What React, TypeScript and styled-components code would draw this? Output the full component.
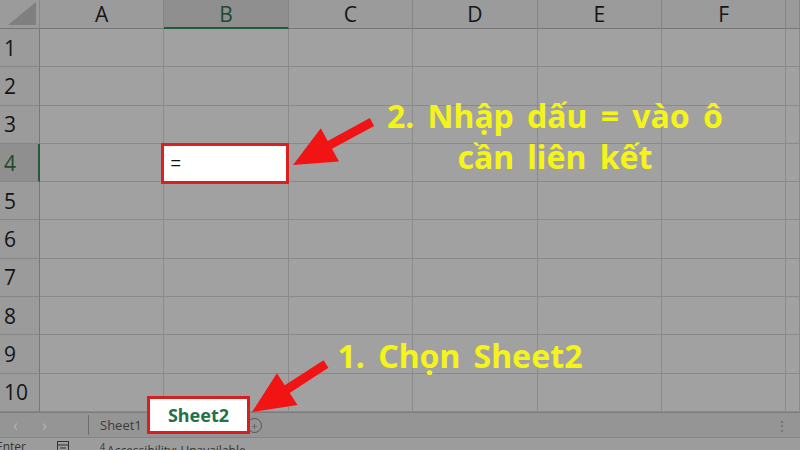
import styled, { createGlobalStyle } from 'styled-components'

const GlobalStyle = createGlobalStyle`
  html, body {
    margin: 0;
    padding: 0;
    background: #a1a1a1;
  }
  #root {
    width: 800px;
    height: 450px;
    overflow: hidden;
  }
`

const COLS = ['A', 'B', 'C', 'D', 'E', 'F', '']
const ROWS = [1, 2, 3, 4, 5, 6, 7, 8, 9, 10]

type Pt = [number, number]

// arrow polygon from tail to tip, shaft + triangular head
const arrowPoints = (tail: Pt, tip: Pt, shaft: number, headL: number, headW: number) => {
  const dx = tip[0] - tail[0]
  const dy = tip[1] - tail[1]
  const len = Math.hypot(dx, dy)
  const ux = dx / len
  const uy = dy / len
  const nx = -uy
  const ny = ux
  const bx = tip[0] - ux * headL
  const by = tip[1] - uy * headL
  const pts: Pt[] = [
    [tail[0] + nx * shaft, tail[1] + ny * shaft],
    [bx + nx * shaft, by + ny * shaft],
    [bx + nx * headW, by + ny * headW],
    tip,
    [bx - nx * headW, by - ny * headW],
    [bx - nx * shaft, by - ny * shaft],
    [tail[0] - nx * shaft, tail[1] - ny * shaft],
  ]
  return pts.map((p) => p.join(',')).join(' ')
}

export default function App() {
  return (
    <>
      <GlobalStyle />
      <Page>
        <Sheet>
          <Corner>
            <CornerTriangle />
          </Corner>
          {COLS.map((c) => (
            <ColHead key={c || 'G'} $active={c === 'B'}>
              {c}
            </ColHead>
          ))}
          {ROWS.map((r) => (
            <Row key={r}>
              <RowHead $active={r === 4}>{r}</RowHead>
              {COLS.map((c) =>
                c === 'B' && r === 4 ? (
                  <EditCell key={c}>=</EditCell>
                ) : (
                  <Cell key={c || 'G'} />
                ),
              )}
            </Row>
          ))}
        </Sheet>

        <TabBar>
          <NavArrow>‹</NavArrow>
          <NavArrow>›</NavArrow>
          <TabDivider />
          <Tab>Sheet1</Tab>
          <ActiveTab>
            <TabHighlight>Sheet2</TabHighlight>
          </ActiveTab>
          <AddSheet>+</AddSheet>
          <Spacer />
          <Dots>⋮</Dots>
        </TabBar>

        <StatusBar>
          <StatusText>Enter</StatusText>
          <StatusIcon width="14" height="14" viewBox="0 0 14 14">
            <rect x="1.5" y="1.5" width="11" height="11" fill="none" stroke="#333" />
            <line x1="1.5" y1="5" x2="12.5" y2="5" stroke="#333" />
            <line x1="4" y1="8" x2="10" y2="8" stroke="#333" />
          </StatusIcon>
          <StatusText>
            <sup>4</sup>Accessibility: Unavailable
          </StatusText>
        </StatusBar>

        <Callout $top={95} $left={375} $width={360}>
          2. Nhập dấu = vào ô
          <br />
          cần liên kết
        </Callout>
        <Callout $top={335} $left={330} $width={260}>
          1. Chọn Sheet2
        </Callout>

        <Arrows width="800" height="450" viewBox="0 0 800 450">
          <polygon points={arrowPoints([372, 122], [293, 165], 4.5, 42, 19)} fill="#f21414" />
          <polygon points={arrowPoints([326, 364], [252, 412], 4.5, 42, 19)} fill="#f21414" />
        </Arrows>
      </Page>
    </>
  )
}

const Page = styled.div`
  position: relative;
  width: 800px;
  height: 450px;
  overflow: hidden;
  display: flex;
  flex-direction: column;
  background: #a1a1a1;
  font-family: 'Open Sans', 'Noto Sans', sans-serif;
`

const Sheet = styled.div`
  display: grid;
  grid-template-columns: 40px repeat(6, 124.4px) 1fr;
  grid-template-rows: 29px;
  grid-auto-rows: 38.3px;
  height: 412px;
  flex-shrink: 0;
`

const Row = styled.div`
  display: contents;
`

const Corner = styled.div`
  position: relative;
  background: #9b9b9b;
  border-right: 1px solid #888;
  border-bottom: 1px solid #777;
`

const CornerTriangle = styled.div`
  position: absolute;
  right: 3px;
  bottom: 3px;
  width: 28px;
  height: 23px;
  background: #7f7f7f;
  clip-path: polygon(100% 0, 100% 100%, 0 100%);
`

const ColHead = styled.div<{ $active?: boolean }>`
  display: flex;
  align-items: center;
  justify-content: center;
  background: ${(p) => (p.$active ? '#8f8f8f' : '#9b9b9b')};
  color: ${(p) => (p.$active ? '#1d4a30' : '#151515')};
  font-size: 21px;
  border-right: 1px solid #868686;
  border-bottom: ${(p) => (p.$active ? '2px solid #1f5a3a' : '1px solid #777')};
  box-sizing: border-box;
`

const RowHead = styled.div<{ $active?: boolean }>`
  display: flex;
  align-items: center;
  padding-left: 4px;
  background: ${(p) => (p.$active ? '#8f8f8f' : '#9b9b9b')};
  color: ${(p) => (p.$active ? '#1d4a30' : '#151515')};
  font-size: 21px;
  border-right: ${(p) => (p.$active ? '2px solid #1f5a3a' : '1px solid #777')};
  border-bottom: 1px solid #868686;
  box-sizing: border-box;
`

const Cell = styled.div`
  background: #a1a1a1;
  border-right: 1px solid #8a8a8a;
  border-bottom: 1px solid #8a8a8a;
  box-sizing: border-box;
`

const EditCell = styled.div`
  position: relative;
  z-index: 1;
  display: flex;
  align-items: center;
  padding-left: 6px;
  margin: -1px 0 -2px -3px;
  background: #fff;
  border: 3px solid #dc2020;
  color: #111;
  font-family: 'Liberation Sans', Arial, sans-serif;
  font-size: 18px;
`

const TabBar = styled.div`
  display: flex;
  align-items: center;
  height: 26px;
  flex-shrink: 0;
  background: #959595;
  border-top: 1px solid #7d7d7d;
  border-bottom: 1px solid #858585;
  box-sizing: border-box;
`

const NavArrow = styled.span`
  width: 27px;
  text-align: center;
  color: #b4b4b4;
  font-size: 16px;
  padding-left: 2px;
`

const TabDivider = styled.div`
  width: 1px;
  height: 20px;
  margin-left: 30px;
  background: #6f6f6f;
`

const Tab = styled.span`
  margin-left: 11px;
  color: #3c3c3c;
  font-size: 13px;
  width: 50px;
`

const ActiveTab = styled.div`
  position: relative;
  width: 103px;
  height: 100%;
  margin-left: -3px;
`

const TabHighlight = styled.div`
  position: absolute;
  left: 0;
  right: 0;
  bottom: 3px;
  height: 38px;
  display: flex;
  align-items: center;
  justify-content: center;
  box-sizing: border-box;
  background: #fff;
  border: 3px solid #d81e1e;
  color: #23704a;
  font-size: 18px;
  font-weight: 700;
  font-family: 'Noto Sans', 'Open Sans', sans-serif;
  z-index: 2;
`

const AddSheet = styled.span`
  display: flex;
  align-items: center;
  justify-content: center;
  width: 13px;
  height: 13px;
  margin-left: -3px;
  border: 1px solid #555;
  border-radius: 50%;
  font-size: 11px;
  line-height: 1;
  color: #555;
`

const Spacer = styled.div`
  flex: 1;
`

const Dots = styled.span`
  color: #666;
  font-size: 12px;
  margin-right: 12px;
`

const StatusBar = styled.div`
  display: flex;
  align-items: flex-start;
  gap: 30px;
  height: 22px;
  padding: 2px 0 0 0;
  background: #9c9c9c;
  box-sizing: border-box;
  margin-left: -4px;
`

const StatusText = styled.span`
  font-size: 12px;
  color: #333;
  line-height: 14px;
  sup {
    font-size: 9px;
    margin-right: 2px;
  }
`

const StatusIcon = styled.svg`
  flex-shrink: 0;
`

const Callout = styled.div<{ $top: number; $left: number; $width: number }>`
  position: absolute;
  top: ${(p) => p.$top}px;
  left: ${(p) => p.$left}px;
  width: ${(p) => p.$width}px;
  text-align: center;
  color: #f4f41a;
  font-family: 'Noto Sans', 'DejaVu Sans', sans-serif;
  font-weight: 700;
  font-size: 32px;
  line-height: 41px;
  word-spacing: 5px;
  white-space: nowrap;
  z-index: 3;
`

const Arrows = styled.svg`
  position: absolute;
  left: 0;
  top: 0;
  pointer-events: none;
  z-index: 4;
`
